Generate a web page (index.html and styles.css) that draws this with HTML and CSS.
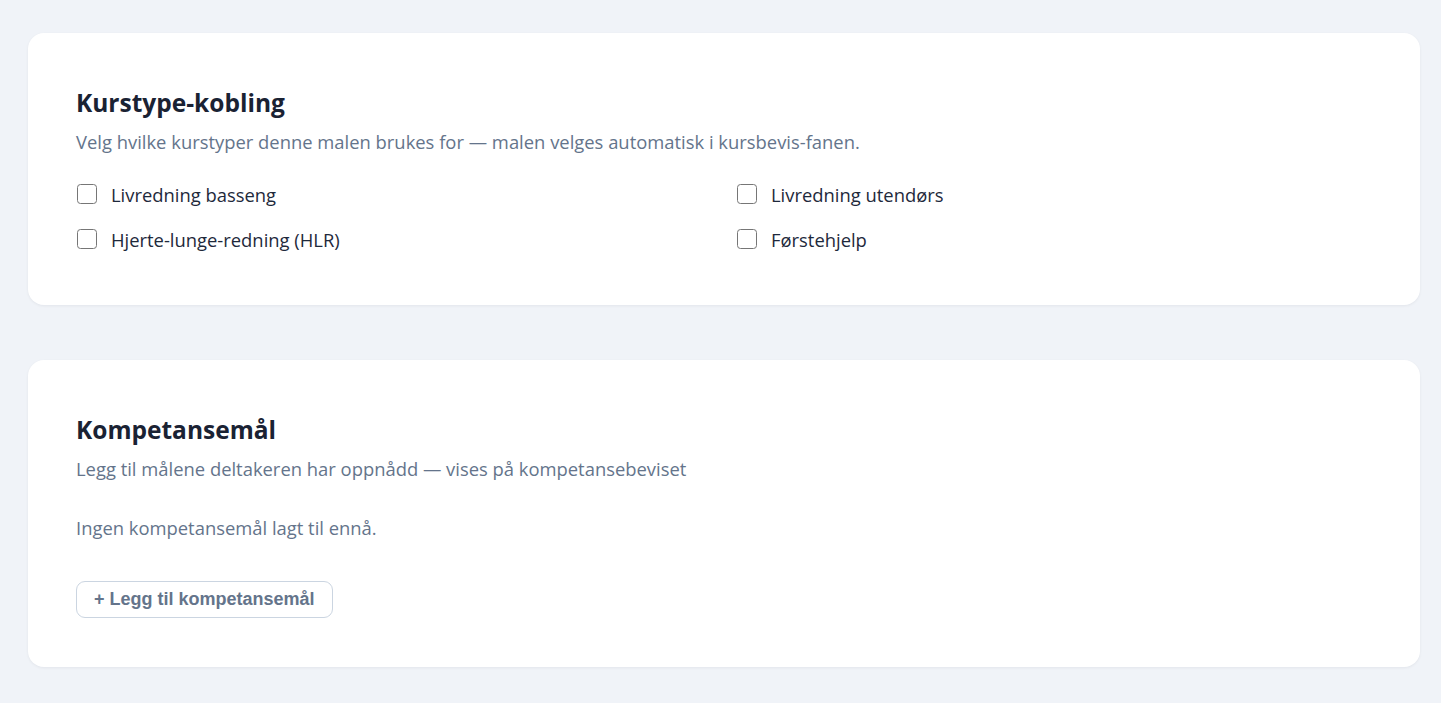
FILE: index.html
```html
<!DOCTYPE html>
<html lang="no">
<head>
<meta charset="utf-8">
<title>Kursbevis-mal</title>
<link rel="stylesheet" href="styles.css">
</head>
<body>
<main class="page">
  <section class="card">
    <h2 class="card-title">Kurstype-kobling</h2>
    <p class="card-sub">Velg hvilke kurstyper denne malen brukes for — malen velges automatisk i kursbevis-fanen.</p>
    <div class="check-grid">
      <label class="check"><input type="checkbox" class="box"><span>Livredning basseng</span></label>
      <label class="check"><input type="checkbox" class="box"><span>Livredning utendørs</span></label>
      <label class="check"><input type="checkbox" class="box"><span>Hjerte-lunge-redning (HLR)</span></label>
      <label class="check"><input type="checkbox" class="box"><span>Førstehjelp</span></label>
    </div>
  </section>
  <section class="card card-b">
    <h2 class="card-title">Kompetansemål</h2>
    <p class="card-sub">Legg til målene deltakeren har oppnådd — vises på kompetansebeviset</p>
    <p class="empty">Ingen kompetansemål lagt til ennå.</p>
    <button class="add-btn" type="button">+ Legg til kompetansemål</button>
  </section>
</main>
</body>
</html>
```
FILE: styles.css
```css
html, body {
  margin: 0;
  padding: 0;
  background: #f0f3f8;
}
body {
  font-family: "Open Sans", "Noto Sans", sans-serif;
  color: #1e293b;
}
.page {
  padding: 33px 21px 37px 28px;
  display: flex;
  flex-direction: column;
  gap: 55px;
}
.card {
  background: #ffffff;
  border-radius: 16px;
  box-shadow: 0 1px 3px rgba(15, 23, 42, 0.06);
  padding: 48px 48px 51px;
  display: flex;
  flex-direction: column;
}
.card-b {
  padding-bottom: 49px;
}
.card-title {
  margin: 6px 0 10px;
  font-size: 24.5px;
  line-height: 32px;
  font-weight: 700;
  color: #1a2233;
}
.card-sub {
  margin: 0;
  font-size: 18.4px;
  line-height: 26px;
  color: #64748b;
}
.check-grid {
  margin-top: 24px;
  display: grid;
  grid-template-columns: 1fr 1fr;
  column-gap: 24px;
  row-gap: 15px;
}
.check {
  display: flex;
  align-items: center;
  gap: 14px;
  min-height: 30px;
  font-size: 18.4px;
  color: #1e293b;
}
.box {
  appearance: none;
  -webkit-appearance: none;
  margin: 0 0 0 1px;
  width: 20px;
  height: 20px;
  border: 1.5px solid #767676;
  border-radius: 3.5px;
  background: #fff;
  flex: none;
}
.empty {
  margin: 33px 0 0;
  font-size: 18.4px;
  line-height: 26px;
  color: #64748b;
}
.add-btn {
  margin-top: 40px;
  align-self: flex-start;
  height: 37px;
  padding: 0 17px;
  background: #fff;
  border: 1px solid #cbd5e1;
  border-radius: 9px;
  font-family: "Liberation Sans", Arial, sans-serif;
  font-weight: 700;
  font-size: 18px;
  color: #64748b;
}
```
